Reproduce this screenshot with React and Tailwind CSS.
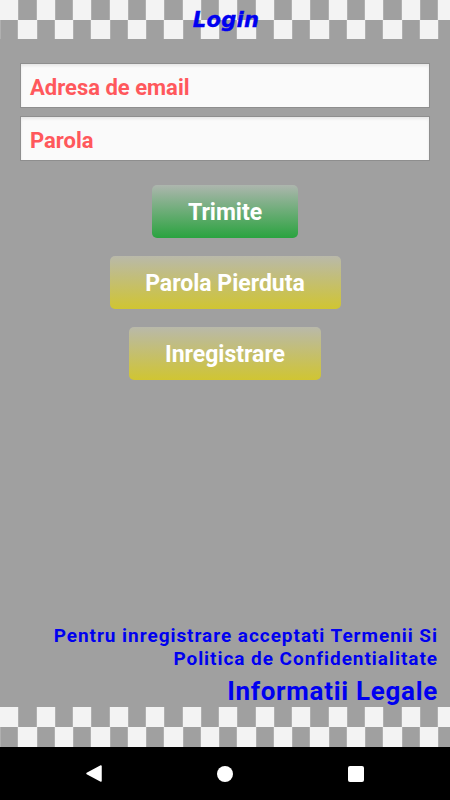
const squares = Array.from({ length: 25 }, (_, i) => i)

function CheckerRow({ startLight, height }) {
  return (
    <div className={`flex overflow-hidden ${height}`}>
      {squares.map((i) => {
        const light = startLight ? i % 2 === 0 : i % 2 === 1
        return (
          <div
            key={i}
            className={
              light
                ? 'w-[18.26px] shrink-0 h-full bg-[#f3f3f3]'
                : 'w-[18.26px] shrink-0 h-full bg-[#a0a0a0] border-x border-[#b0b0b0]'
            }
          />
        )
      })}
    </div>
  )
}

function Checker({ rowHeight }) {
  return (
    <div className="flex flex-col">
      <CheckerRow startLight height={rowHeight} />
      <CheckerRow startLight={false} height={rowHeight} />
    </div>
  )
}

function Field({ placeholder }) {
  return (
    <div className="h-[45px] border border-[#8e8e8e] bg-[#fafafa] shadow-[inset_0_2px_3px_rgba(0,0,0,0.08)] flex items-center px-[9px] pt-[3px]">
      <span className="text-[22px] font-bold text-[#ff585c]">{placeholder}</span>
    </div>
  )
}

function GradButton({ label, width, green }) {
  return (
    <button
      type="button"
      className={`${width} h-[53px] rounded-[5px] text-white text-[23px] font-bold flex items-center justify-center pt-[4px] ${
        green
          ? 'bg-[linear-gradient(to_bottom,#adb6ae,#2aa33f)]'
          : 'bg-[linear-gradient(to_bottom,#b9b9aa,#d0c532)]'
      }`}
    >
      {label}
    </button>
  )
}

export default function App() {
  return (
    <div
      className="h-[800px] w-[450px] flex flex-col bg-[#a0a0a0] overflow-hidden"
      style={{ fontFamily: 'Roboto, "Noto Sans", sans-serif' }}
    >
      {/* header */}
      <div className="relative">
        <Checker rowHeight="h-[19.5px]" />
        <div className="absolute inset-0 flex items-center justify-center pt-[3px]">
          <span
            className="text-[21px] font-bold italic text-[#0000f0] pl-[2px] tracking-[0.3px] [-webkit-text-stroke:0.4px_#0000f0]"
            style={{ fontFamily: '"DejaVu Sans", sans-serif' }}
          >
            Login
          </span>
        </div>
      </div>

      {/* form */}
      <div className="flex flex-col gap-[8px] px-[20px] mt-[24px]">
        <Field placeholder="Adresa de email" />
        <Field placeholder="Parola" />
      </div>

      <div className="flex flex-col items-center gap-[18px] mt-[24px]">
        <GradButton label="Trimite" width="w-[146px]" green />
        <GradButton label="Parola Pierduta" width="w-[231px]" />
        <GradButton label="Inregistrare" width="w-[192px]" />
      </div>

      <div className="flex-1" />

      {/* legal */}
      <div className="flex flex-col items-end pr-[12px] text-[#0000f0] font-bold text-right">
        <p className="text-[19px] leading-[23px] tracking-[0.95px]">
          Pentru inregistrare acceptati Termenii Si
          <br />
          Politica de Confidentialitate
        </p>
        <p className="text-[26px] leading-[32px] tracking-[0.7px] mt-[5px]">Informatii Legale</p>
      </div>

      <Checker rowHeight="h-[20px]" />

      {/* android nav */}
      <div className="h-[53px] bg-black flex items-center justify-between px-[86px]">
        <svg width="16" height="17" viewBox="0 0 16 17">
          <path d="M15 1 L15 16 L1 8.5 Z" fill="white" stroke="white" strokeWidth="1.5" strokeLinejoin="round" />
        </svg>
        <div className="w-[16px] h-[16px] rounded-full bg-white" />
        <div className="w-[16px] h-[16px] rounded-[2px] bg-white" />
      </div>
    </div>
  )
}
